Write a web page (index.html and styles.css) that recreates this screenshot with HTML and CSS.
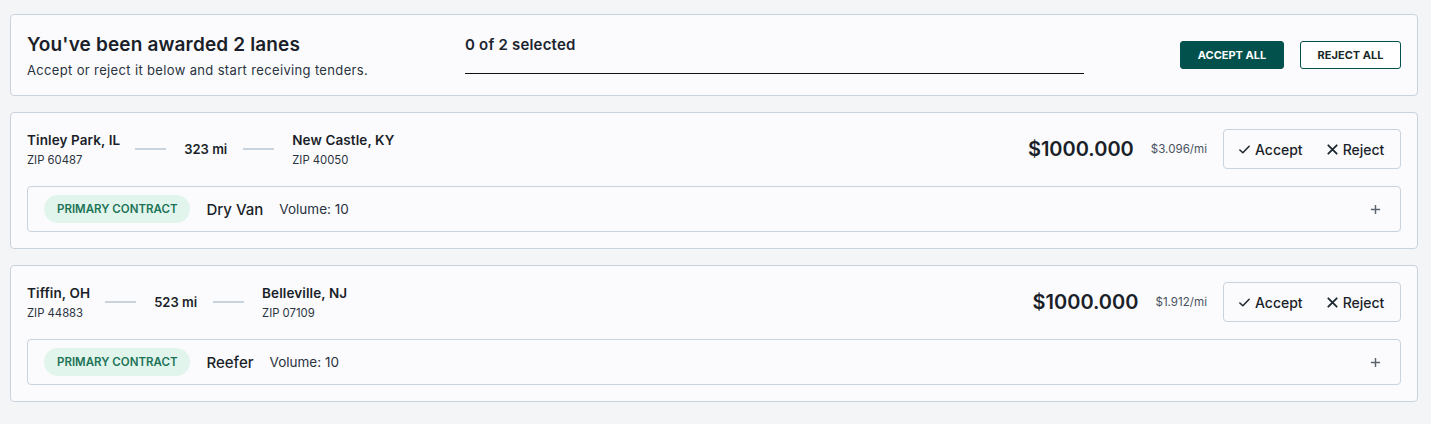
FILE: index.html
```html
<!DOCTYPE html>
<html lang="en">
<head>
<meta charset="utf-8">
<title>Awarded lanes</title>
<link rel="stylesheet" href="styles.css">
</head>
<body>
<div class="page">
  <section class="card header">
    <div class="intro">
      <h1 class="title">You've been awarded 2 lanes</h1>
      <p class="subtitle">Accept or reject it below and start receiving tenders.</p>
    </div>
    <div class="progress">
      <div class="progress-label">0 of 2 selected</div>
      <div class="progress-track"></div>
    </div>
    <div class="bulk">
      <button class="btn btn-primary">ACCEPT ALL</button>
      <button class="btn btn-outline">REJECT ALL</button>
    </div>
  </section>

  <section class="card lane">
    <div class="lane-top">
      <div class="route">
        <div class="place">
          <div class="city">Tinley Park, IL</div>
          <div class="zip">ZIP 60487</div>
        </div>
        <span class="dash"></span>
        <div class="dist">323 mi</div>
        <span class="dash"></span>
        <div class="place">
          <div class="city">New Castle, KY</div>
          <div class="zip">ZIP 40050</div>
        </div>
      </div>
      <div class="pricing">
        <div class="price">$1000.000</div>
        <div class="rate">$3.096/mi</div>
        <div class="actions">
          <button class="act"><svg viewBox="0 0 14 14" width="13" height="13"><path d="M2 7.5 5.2 10.5 12 3.5" fill="none" stroke="currentColor" stroke-width="1.7" stroke-linecap="round" stroke-linejoin="round"/></svg>Accept</button>
          <button class="act"><svg viewBox="0 0 14 14" width="13" height="13"><path d="M2.5 2.5 11.5 11.5M11.5 2.5 2.5 11.5" fill="none" stroke="currentColor" stroke-width="2" stroke-linecap="round"/></svg>Reject</button>
        </div>
      </div>
    </div>
    <div class="detail">
      <span class="badge">PRIMARY CONTRACT</span>
      <span class="equip">Dry Van</span>
      <span class="volume">Volume: 10</span>
      <span class="plus"><svg viewBox="0 0 12 12" width="11" height="11"><path d="M6 1v10M1 6h10" stroke="currentColor" stroke-width="1.6"/></svg></span>
    </div>
  </section>

  <section class="card lane">
    <div class="lane-top">
      <div class="route">
        <div class="place">
          <div class="city">Tiffin, OH</div>
          <div class="zip">ZIP 44883</div>
        </div>
        <span class="dash"></span>
        <div class="dist">523 mi</div>
        <span class="dash"></span>
        <div class="place">
          <div class="city">Belleville, NJ</div>
          <div class="zip">ZIP 07109</div>
        </div>
      </div>
      <div class="pricing">
        <div class="price">$1000.000</div>
        <div class="rate">$1.912/mi</div>
        <div class="actions">
          <button class="act"><svg viewBox="0 0 14 14" width="13" height="13"><path d="M2 7.5 5.2 10.5 12 3.5" fill="none" stroke="currentColor" stroke-width="1.7" stroke-linecap="round" stroke-linejoin="round"/></svg>Accept</button>
          <button class="act"><svg viewBox="0 0 14 14" width="13" height="13"><path d="M2.5 2.5 11.5 11.5M11.5 2.5 2.5 11.5" fill="none" stroke="currentColor" stroke-width="2" stroke-linecap="round"/></svg>Reject</button>
        </div>
      </div>
    </div>
    <div class="detail">
      <span class="badge">PRIMARY CONTRACT</span>
      <span class="equip">Reefer</span>
      <span class="volume">Volume: 10</span>
      <span class="plus"><svg viewBox="0 0 12 12" width="11" height="11"><path d="M6 1v10M1 6h10" stroke="currentColor" stroke-width="1.6"/></svg></span>
    </div>
  </section>
</div>
</body>
</html>
```
FILE: styles.css
```css
* { box-sizing: border-box; }
html, body { margin: 0; padding: 0; }
body {
  background: #f4f5f7;
  font-family: "Inter", "Noto Sans", sans-serif;
  color: #1c2430;
}
.page {
  padding: 14px 13px 0 10px;
  display: flex;
  flex-direction: column;
  gap: 16px;
}
.card {
  background: #fbfbfd;
  border: 1px solid #c9d3dd;
  border-radius: 4px;
}
.header {
  height: 82px;
  padding: 16px 16px 0 16px;
  display: flex;
  align-items: flex-start;
}
.intro { width: 438px; }
.title {
  margin: 0;
  font-size: 19px;
  line-height: 28px;
  font-weight: 600;
  letter-spacing: 0.15px;
  color: #1a1f29;
}
.subtitle {
  margin: 2px 0 0;
  font-size: 13px;
  line-height: 18px;
  letter-spacing: 0.35px;
  color: #2a3340;
}
.progress {
  width: 619px;
  padding-top: 4px;
}
.progress-label {
  font-size: 15px;
  font-weight: 600;
  line-height: 20px;
  letter-spacing: 0.2px;
}
.progress-track {
  margin-top: 18px;
  height: 1px;
  background: #111;
}
.bulk {
  margin-left: auto;
  display: flex;
  gap: 16px;
  padding-top: 10px;
}
.btn {
  font-family: inherit;
  font-size: 11px;
  font-weight: 700;
  letter-spacing: 0;
  height: 28px;
  border-radius: 3px;
  cursor: pointer;
}
.btn-primary {
  width: 104px;
  background: #03514c;
  color: #fff;
  border: 1px solid #03514c;
}
.btn-outline {
  width: 101px;
  background: #fff;
  color: #1a2a2a;
  border: 1px solid #03514c;
}
.lane {
  height: 137px;
  padding: 16px 16px 0 16px;
}
.lane-top {
  display: flex;
  align-items: center;
  height: 40px;
}
.route {
  display: flex;
  align-items: center;
}
.city {
  font-size: 13.5px;
  font-weight: 600;
  line-height: 18px;
  color: #1a1f29;
  letter-spacing: 0.1px;
}
.zip {
  font-size: 11.3px;
  line-height: 16px;
  color: #2a3340;
  margin-top: 3px;
}
.dash {
  width: 31px;
  height: 2px;
  background: #c9d3dd;
  margin: 0 18px 0 15px;
}
.dist + .dash { margin: 0 18px 0 16px; }
.dist {
  font-size: 13px;
  font-weight: 600;
  color: #1a1f29;
}
.pricing {
  margin-left: auto;
  display: flex;
  align-items: center;
}
.price {
  font-size: 20px;
  font-weight: 600;
  letter-spacing: 0;
  color: #1a1f29;
}
.rate {
  font-size: 11.6px;
  color: #4a5260;
  margin-left: 17px;
  margin-right: 16px;
}
.actions {
  height: 40px;
  width: 178px;
  border: 1px solid #c9d3dd;
  border-radius: 4px;
  display: flex;
  align-items: center;
  padding-left: 14px;
  gap: 23px;
}
.act {
  background: none;
  border: 0;
  padding: 0;
  font-family: inherit;
  font-size: 14px;
  font-weight: 500;
  color: #1a1f29;
  display: flex;
  align-items: center;
  gap: 4px;
  cursor: pointer;
}
.act svg { color: #1f2a30; }
.detail {
  margin-top: 17px;
  height: 46px;
  border: 1px solid #c9d3dd;
  border-radius: 4px;
  display: flex;
  align-items: center;
  padding: 0 19px 0 16px;
}
.badge {
  height: 28px;
  padding: 0 13px;
  border-radius: 14px;
  background: #e2f5ec;
  color: #1c7357;
  font-size: 11.5px;
  font-weight: 600;
  letter-spacing: 0;
  display: flex;
  align-items: center;
}
.equip {
  margin-left: 16px;
  font-size: 15px;
  font-weight: 500;
  color: #1a1f29;
}
.volume {
  margin-left: 16px;
  font-size: 13.5px;
  color: #2a3340;
}
.plus {
  margin-left: auto;
  color: #5b6570;
  display: flex;
}
```
